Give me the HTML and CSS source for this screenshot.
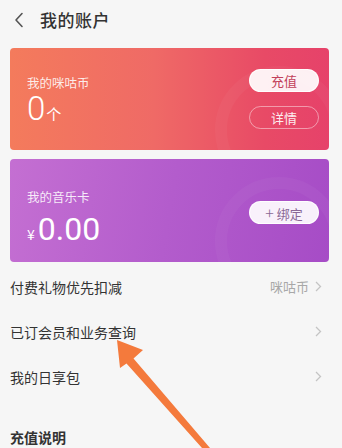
FILE: index.html
```html
<!DOCTYPE html>
<html lang="zh">
<head>
<meta charset="utf-8">
<link rel="stylesheet" href="styles.css">
</head>
<body>
<div class="page">
  <header class="topbar">
    <svg class="back" width="10" height="16" viewBox="0 0 10 16"><path d="M8 1.5 L2 8 L8 14.5" fill="none" stroke="#555" stroke-width="1.6" stroke-linecap="round" stroke-linejoin="round"/></svg>
    <h1 class="title">我的账户</h1>
  </header>

  <section class="cards">
    <div class="card card-coin">
      <div class="card-info">
        <div class="card-label">我的咪咕币</div>
        <div class="card-value"><span class="big">0</span><span class="unit">个</span></div>
      </div>
      <div class="card-actions">
        <button class="pill pill-solid coin-text">充值</button>
        <button class="pill pill-outline">详情</button>
      </div>
    </div>
    <div class="card card-music">
      <div class="card-info">
        <div class="card-label">我的音乐卡</div>
        <div class="card-value"><span class="yen">¥</span><span class="big">0.00</span></div>
      </div>
      <div class="card-actions">
        <button class="pill pill-solid music-text"><span class="plus">+</span> 绑定</button>
      </div>
    </div>
  </section>

  <ul class="list">
    <li class="row"><span>付费礼物优先扣减</span><span class="row-right">咪咕币<svg class="chev" width="7" height="11" viewBox="0 0 7 11"><path d="M1 1 L5.5 5.5 L1 10" fill="none" stroke="#c4c4c4" stroke-width="1.3"/></svg></span></li>
    <li class="row"><span>已订会员和业务查询</span><span class="row-right"><svg class="chev" width="7" height="11" viewBox="0 0 7 11"><path d="M1 1 L5.5 5.5 L1 10" fill="none" stroke="#c4c4c4" stroke-width="1.3"/></svg></span></li>
    <li class="row"><span>我的日享包</span><span class="row-right"><svg class="chev" width="7" height="11" viewBox="0 0 7 11"><path d="M1 1 L5.5 5.5 L1 10" fill="none" stroke="#c4c4c4" stroke-width="1.3"/></svg></span></li>
  </ul>

  <h2 class="section-title">充值说明</h2>

  <svg class="arrow" width="342" height="448" viewBox="0 0 342 448">
    <polygon points="117,340 143,350 133.5,358.5 210,448 202,448 126.5,363.5 120,368" fill="#f47a3c"/>
  </svg>
</div>
</body>
</html>
```
FILE: styles.css
```css
* { box-sizing: border-box; }
html, body { margin: 0; padding: 0; }
body {
  background: #f6f6f6;
  font-family: "Noto Sans CJK SC", "Noto Sans", sans-serif;
  color: #333;
  width: 342px;
  height: 448px;
  overflow: hidden;
}
.page { position: relative; width: 342px; height: 448px; }
.topbar {
  height: 38px;
  display: flex;
  align-items: center;
  padding: 0 0 0 14px;
  gap: 16px;
}
.back { display: block; margin-top: 2px; }
.title {
  margin: 0;
  font-size: 17px;
  font-weight: 500;
  color: #333;
  letter-spacing: 0.5px;
}
.cards {
  padding: 10px 13px 0 10px;
  display: flex;
  flex-direction: column;
  gap: 9px;
}
.card {
  position: relative;
  overflow: hidden;
  height: 102px;
  border-radius: 4px;
  display: flex;
  justify-content: space-between;
  align-items: center;
  padding: 0 10px 0 17px;
  color: #fff;
}
.card::after {
  content: "";
  position: absolute;
  right: -14px;
  top: 18px;
  width: 104px;
  height: 104px;
  border-radius: 50%;
  border: 12px solid rgba(255,255,255,0.035);
  pointer-events: none;
}
.card-coin {
  background: linear-gradient(90deg, #f47b5c 0%, #ef6a66 45%, #e84a66 80%, #e6426a 100%);
}
.card-music {
  height: 103px;
  background: linear-gradient(100deg, #c46fd2 0%, #b35ccc 50%, #a64cc6 100%);
}
.card-info { display: flex; flex-direction: column; }
.card-label {
  font-size: 12.5px;
  color: rgba(255,255,255,0.88);
  line-height: 16px;
}
.card-coin .card-info { margin-top: 2px; }
.card-music .card-info { margin-top: 12px; }
.card-value { display: flex; align-items: baseline; line-height: 1; }
.card-coin .card-value { margin-top: 1px; }
.card-music .card-value { margin-top: 8px; }
.big {
  font-family: "Roboto", "Noto Sans", sans-serif;
  font-weight: 300;
  font-size: 33px;
}
.card-music .big { font-size: 32px; font-weight: 400; }
.unit { font-size: 15px; margin-left: 1px; }
.yen { font-size: 14px; margin-right: 3px; }
.card-actions {
  display: flex;
  flex-direction: column;
  gap: 14px;
  position: relative;
  z-index: 1;
}
.pill {
  width: 70px;
  height: 23px;
  border-radius: 12px;
  font-family: "Noto Sans CJK SC", sans-serif;
  font-size: 13px;
  padding: 0;
  line-height: 21px;
}
.pill-solid {
  background: rgba(255,255,255,0.92);
  border: 1px solid rgba(255,255,255,0.92);
}
.coin-text { color: #c2405a; }
.music-text { color: #8a6896; margin-top: 4px; }
.plus { font-size: 16px; font-weight: 300; }
.pill-outline {
  background: transparent;
  border: 1px solid rgba(255,255,255,0.45);
  color: rgba(255,255,255,0.92);
}
.list {
  list-style: none;
  margin: 2px 0 0 0;
  padding: 0;
}
.row {
  height: 45px;
  display: flex;
  align-items: center;
  justify-content: space-between;
  padding: 0 20px 0 10px;
  font-size: 14px;
  color: #333;
}
.row-right {
  display: flex;
  align-items: center;
  gap: 6px;
  color: #a8a8a8;
  font-size: 13px;
}
.chev { display: block; }
.section-title {
  margin: 0;
  padding: 28px 0 0 10px;
  font-size: 14px;
  font-weight: 600;
  color: #333;
}
.arrow {
  position: absolute;
  left: 0;
  top: 0;
  pointer-events: none;
}
```
